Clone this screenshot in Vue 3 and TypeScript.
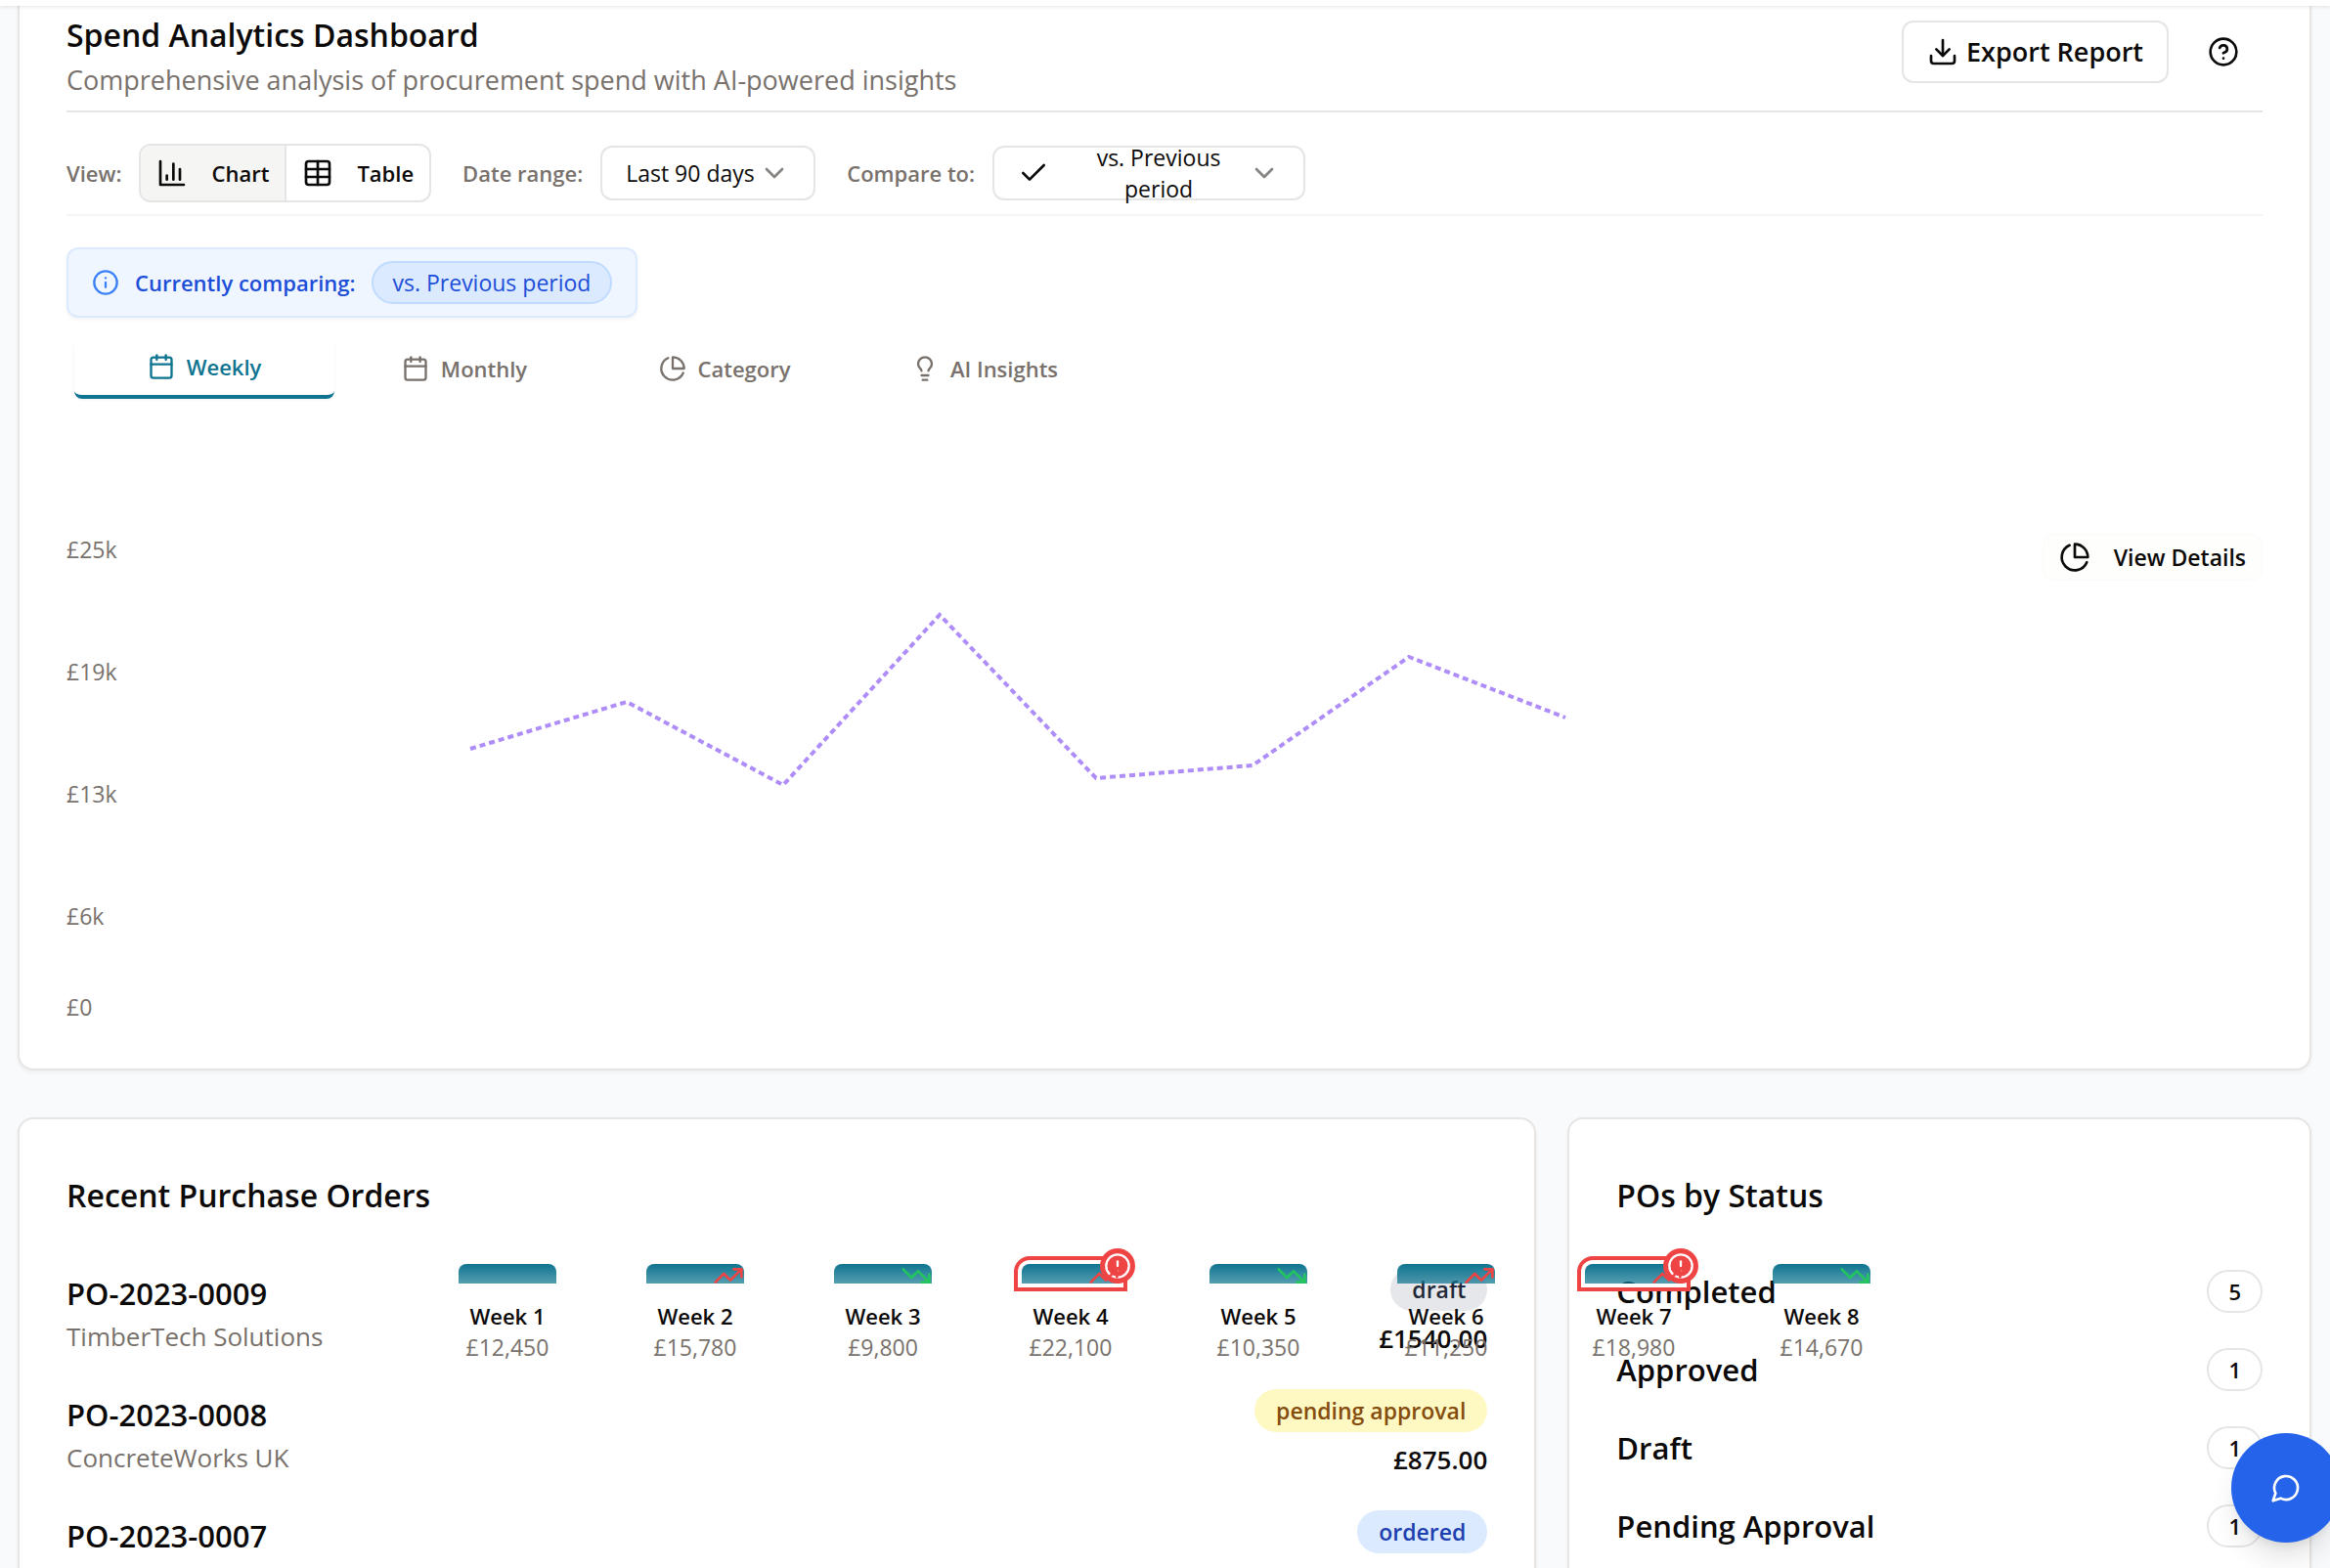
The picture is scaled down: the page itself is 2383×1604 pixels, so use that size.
<script setup lang="ts">
import { ref } from 'vue'

interface Week {
  name: string
  amount: string
  trend?: 'up' | 'down'
  alert?: boolean
}

interface Order {
  id: string
  supplier?: string
  status: string
  tone: string
  total?: string
}

const view = ref<'chart' | 'table'>('chart')
const range = ref('90')
const compare = ref('previous')
const activeTab = ref('Weekly')

const tabs = [
  { name: 'Weekly', icon: 'calendar' },
  { name: 'Monthly', icon: 'calendar' },
  { name: 'Category', icon: 'pie' },
  { name: 'AI Insights', icon: 'bulb' },
]

const axis = ['£25k', '£19k', '£13k', '£6k', '£0']

const weeks: Week[] = [
  { name: 'Week 1', amount: '£12,450' },
  { name: 'Week 2', amount: '£15,780', trend: 'up' },
  { name: 'Week 3', amount: '£9,800', trend: 'down' },
  { name: 'Week 4', amount: '£22,100', trend: 'up', alert: true },
  { name: 'Week 5', amount: '£10,350', trend: 'down' },
  { name: 'Week 6', amount: '£11,250', trend: 'up' },
  { name: 'Week 7', amount: '£18,980', trend: 'up', alert: true },
  { name: 'Week 8', amount: '£14,670', trend: 'down' },
]

const orders: Order[] = [
  { id: 'PO-2023-0009', supplier: 'TimberTech Solutions', status: 'draft', tone: 'gray', total: '£1540.00' },
  { id: 'PO-2023-0008', supplier: 'ConcreteWorks UK', status: 'pending approval', tone: 'yellow', total: '£875.00' },
  { id: 'PO-2023-0007', status: 'ordered', tone: 'blue' },
]

const statuses = [
  { name: 'Completed', count: 5 },
  { name: 'Approved', count: 1 },
  { name: 'Draft', count: 1 },
  { name: 'Pending Approval', count: 1 },
]
</script>

<template>
  <div class="page">
    <div class="topbar"></div>

    <main class="content">
      <section class="card analytics">
        <header class="head">
          <div>
            <h1 class="title">Spend Analytics Dashboard</h1>
            <p class="subtitle">Comprehensive analysis of procurement spend with AI-powered insights</p>
          </div>
          <div class="actions">
            <button type="button" class="export">
              <svg class="icon lg" viewBox="0 0 24 24"><path d="M21 15v4a2 2 0 0 1-2 2H5a2 2 0 0 1-2-2v-4" /><path d="m7 10 5 5 5-5" /><path d="M12 15V3" /></svg>
              Export Report
            </button>
            <button type="button" class="help" aria-label="Help">
              <svg class="icon lg" viewBox="0 0 24 24"><circle cx="12" cy="12" r="10" /><path d="M9.09 9a3 3 0 0 1 5.83 1c0 2-3 3-3 3" /><path d="M12 17h.01" /></svg>
            </button>
          </div>
        </header>

        <div class="toolbar">
          <div class="field">
            <span class="label">View:</span>
            <div class="toggle">
              <button type="button" :class="{ on: view === 'chart' }" @click="view = 'chart'">
                <svg class="icon lg" viewBox="0 0 24 24"><path d="M3 3v18h18" /><path d="M13 17V5" /><path d="M18 17V9" /><path d="M8 17v-3" /></svg>
                Chart
              </button>
              <button type="button" :class="{ on: view === 'table' }" @click="view = 'table'">
                <svg class="icon lg" viewBox="0 0 24 24"><path d="M12 3v18" /><rect x="3" y="3" width="18" height="18" rx="2" /><path d="M3 9h18" /><path d="M3 15h18" /></svg>
                Table
              </button>
            </div>
          </div>
          <div class="field">
            <label class="label" for="range">Date range:</label>
            <div class="select">
              <select id="range" v-model="range">
                <option value="90">Last 90 days</option>
                <option value="30">Last 30 days</option>
              </select>
              <svg class="icon lg chevron" viewBox="0 0 24 24"><path d="m6 9 6 6 6-6" /></svg>
            </div>
          </div>
          <div class="field">
            <label class="label" for="compare">Compare to:</label>
            <div class="select wide">
              <svg class="icon lg" viewBox="0 0 24 24"><path d="M20 6 9 17l-5-5" /></svg>
              <span class="chosen" aria-hidden="true">vs. Previous period</span>
              <svg class="icon lg chevron" viewBox="0 0 24 24"><path d="m6 9 6 6 6-6" /></svg>
              <select id="compare" v-model="compare" class="cover">
                <option value="previous">vs. Previous period</option>
                <option value="year">vs. Last year</option>
              </select>
            </div>
          </div>
        </div>

        <div class="comparing">
          <svg class="icon info" viewBox="0 0 24 24"><circle cx="12" cy="12" r="10" /><path d="M12 16v-4" /><path d="M12 8h.01" /></svg>
          <strong>Currently comparing:</strong>
          <span class="chip">vs. Previous period</span>
        </div>

        <div class="tabs" role="tablist">
          <button
            v-for="tab in tabs"
            :key="tab.name"
            type="button"
            role="tab"
            class="tab"
            :class="{ active: activeTab === tab.name }"
            :aria-selected="activeTab === tab.name"
            @click="activeTab = tab.name"
          >
            <svg class="icon" viewBox="0 0 24 24">
              <template v-if="tab.icon === 'calendar'"><path d="M8 2v4" /><path d="M16 2v4" /><rect x="3" y="4" width="18" height="18" rx="2" /><path d="M3 10h18" /></template>
              <template v-else-if="tab.icon === 'pie'"><path d="M21.21 15.89A10 10 0 1 1 8 2.83" /><path d="M22 12A10 10 0 0 0 12 2v10z" /></template>
              <template v-else><path d="M15 14c.2-1 .7-1.7 1.5-2.5 1-.9 1.5-2.2 1.5-3.5A6 6 0 0 0 6 8c0 1 .2 2.2 1.5 3.5.7.7 1.3 1.5 1.5 2.5" /><path d="M9 18h6" /><path d="M10 22h4" /></template>
            </svg>
            {{ tab.name }}
          </button>
        </div>

        <div class="plot">
          <div class="axis">
            <span v-for="tick in axis" :key="tick">{{ tick }}</span>
          </div>
          <svg class="trendline" viewBox="0 0 1136 200">
            <polyline points="8,149 168,101 328,186 488,12 648,179 808,166 968,55 1128,117" />
          </svg>
          <button type="button" class="details">
            <svg class="icon lg" viewBox="0 0 24 24"><path d="M21.21 15.89A10 10 0 1 1 8 2.83" /><path d="M22 12A10 10 0 0 0 12 2v10z" /></svg>
            View Details
          </button>

          <div class="weeks">
            <div v-for="week in weeks" :key="week.name" class="week">
              <div class="bar" :class="{ flagged: week.alert }">
                <span v-if="week.alert" class="alert">
                  <svg class="icon" viewBox="0 0 24 24"><circle cx="12" cy="12" r="10" /><path d="M12 8v4" /><path d="M12 16h.01" /></svg>
                </span>
                <svg v-if="week.trend === 'up'" class="icon trend up" viewBox="0 0 24 24"><path d="m22 7-8.5 8.5-5-5L2 17" /><path d="M16 7h6v6" /></svg>
                <svg v-if="week.trend === 'down'" class="icon trend down" viewBox="0 0 24 24"><path d="m22 17-8.5-8.5-5 5L2 7" /><path d="M16 17h6v-6" /></svg>
              </div>
              <span class="week-name">{{ week.name }}</span>
              <span class="week-amount">{{ week.amount }}</span>
            </div>
          </div>
        </div>
      </section>

      <div class="columns">
        <section class="card panel">
          <h2 class="title">Recent Purchase Orders</h2>
          <ul class="rows">
            <li v-for="order in orders" :key="order.id" class="order">
              <div class="who">
                <span class="po">{{ order.id }}</span>
                <span v-if="order.supplier" class="supplier">{{ order.supplier }}</span>
              </div>
              <div class="state">
                <span class="pill" :class="order.tone">{{ order.status }}</span>
                <span v-if="order.total" class="total">{{ order.total }}</span>
              </div>
            </li>
          </ul>
        </section>

        <section class="card panel">
          <h2 class="title">POs by Status</h2>
          <ul class="rows">
            <li v-for="status in statuses" :key="status.name" class="status">
              <span class="po">{{ status.name }}</span>
              <span class="count">{{ status.count }}</span>
            </li>
          </ul>
        </section>
      </div>
    </main>

    <button type="button" class="chat" aria-label="Open chat">
      <svg class="icon lg" viewBox="0 0 24 24"><path d="M7.9 20A9 9 0 1 0 4 16.1L2 22Z" /></svg>
    </button>
  </div>
</template>

<style>
body {
  margin: 0;
  background: #f8fafc;
}
</style>

<style scoped>
.page {
  height: 100vh;
  overflow: hidden;
  background: #f8fafc;
  color: #0c0a09;
  font: 400 23px/32px "Open Sans", "Noto Sans", sans-serif;
}
.page * {
  box-sizing: border-box;
}
button,
select {
  margin: 0;
  border: 0;
  background: none;
  color: inherit;
  font: inherit;
  cursor: pointer;
}
h1,
h2,
p,
ul {
  margin: 0;
  padding: 0;
  list-style: none;
}
.icon {
  width: 28px;
  height: 28px;
  flex: none;
  fill: none;
  stroke: currentColor;
  stroke-width: 2;
  stroke-linecap: round;
  stroke-linejoin: round;
}
.icon.lg {
  width: 32px;
  height: 32px;
}
.topbar {
  position: relative;
  z-index: 2;
  height: 6px;
  background: #fff;
  box-shadow: 0 1px 4px rgba(0, 0, 0, 0.1);
}
.content {
  padding: 0 19px 0 18px;
}
.card {
  border: 2px solid #e7e5e4;
  border-radius: 16px;
  background: #fff;
  box-shadow: 0 2px 4px rgba(0, 0, 0, 0.05);
}
.title {
  font-size: 32px;
  font-weight: 600;
  line-height: 40px;
}

/* analytics card */
.analytics {
  padding: 10px 48px 48px;
  border-top: 0;
  border-radius: 0 0 16px 16px;
}
.head {
  display: flex;
  justify-content: space-between;
  align-items: flex-start;
  padding-bottom: 9px;
  border-bottom: 2px solid #e5e5e5;
}
.subtitle {
  margin-top: 4px;
  color: #78716c;
  font-size: 27px;
  line-height: 44px;
}
.actions {
  display: flex;
  gap: 16px;
  padding-top: 5px;
}
.export {
  display: flex;
  align-items: center;
  gap: 8px;
  height: 64px;
  padding: 0 24px;
  border: 2px solid #e5e5e5;
  border-radius: 12px;
  font-size: 27px;
  font-weight: 600;
}
.help {
  display: grid;
  place-items: center;
  width: 80px;
  height: 64px;
  padding: 0;
}
.toolbar {
  display: flex;
  align-items: center;
  gap: 32px;
  padding: 32px 0 12px;
  border-bottom: 2px solid #f5f5f4;
}
.field {
  display: flex;
  align-items: center;
  gap: 18px;
}
.label {
  color: #78716c;
  font-size: 22px;
  font-weight: 600;
}
.toggle {
  display: flex;
  height: 60px;
  overflow: hidden;
  border: 2px solid #e5e5e5;
  border-radius: 12px;
}
.toggle button {
  display: flex;
  align-items: center;
  gap: 24px;
  padding: 0 16px;
  font-size: 22px;
  font-weight: 600;
}
.toggle button + button {
  border-left: 2px solid #e5e5e5;
}
.toggle .on {
  background: #f5f5f4;
}
.select {
  position: relative;
  display: flex;
  align-items: center;
  width: 220px;
  height: 56px;
  border: 2px solid #e5e5e5;
  border-radius: 12px;
}
.select select {
  width: 100%;
  height: 100%;
  padding: 0 24px;
  appearance: none;
  outline: none;
}
.select > .chevron {
  position: absolute;
  right: 24px;
  color: #868381;
  pointer-events: none;
}
.select.wide {
  width: 320px;
  padding: 0 24px;
}
.chosen {
  flex: 1;
  padding: 0 48px 0 36px;
  text-align: center;
}
.select .cover {
  position: absolute;
  inset: 0;
  opacity: 0;
}
.comparing {
  display: flex;
  align-items: center;
  gap: 16px;
  width: fit-content;
  height: 72px;
  margin-top: 32px;
  padding: 0 24px;
  border: 2px solid #dbeafe;
  border-radius: 12px;
  background: #eff6ff;
  box-shadow: 0 2px 4px rgba(0, 0, 0, 0.05);
  color: #1d4ed8;
}
.comparing strong {
  font-size: 22px;
  font-weight: 600;
}
.info {
  color: #3b82f6;
}
.chip {
  height: 44px;
  padding: 0 20px;
  border: 2px solid #bfdbfe;
  border-radius: 22px;
  background: #dbeafe;
  line-height: 40px;
}
.tabs {
  display: grid;
  grid-template-columns: repeat(4, 266px);
  margin-top: 21px;
  padding-left: 8px;
}
.tab {
  display: flex;
  justify-content: center;
  align-items: center;
  gap: 12px;
  height: 62px;
  padding: 0;
  border-radius: 8px;
  color: #78716c;
  font-size: 22px;
  font-weight: 600;
}
.tab.active {
  border-bottom: 4px solid #0e7490;
  box-shadow: 0 1px 3px rgba(0, 0, 0, 0.06);
  color: #0e7490;
}

/* weekly plot */
.plot {
  position: relative;
  display: flex;
  justify-content: space-between;
  align-items: flex-start;
  height: 499px;
  margin-top: 138px;
}
.axis {
  display: grid;
  grid-template-rows: 125px 125px 125px 93px 32px;
  color: #78716c;
}
.trendline {
  position: absolute;
  top: 71px;
  left: 405px;
  width: 1136px;
  height: 200px;
}
.trendline polyline {
  fill: none;
  stroke: #8b5cf6;
  stroke-width: 4;
  stroke-dasharray: 6 4;
  opacity: 0.7;
}
.details {
  display: flex;
  align-items: center;
  gap: 24px;
  height: 48px;
  padding: 0 16px;
  border: 1px solid #fafaf9;
  border-radius: 12px;
  background: #fefefd;
  font-weight: 600;
}
.weeks {
  position: absolute;
  z-index: 1;
  top: 747px;
  right: 0;
  left: 0;
  display: flex;
  justify-content: center;
  gap: 92px;
}
.week {
  display: flex;
  flex-direction: column;
  align-items: center;
  width: 100px;
}
.bar {
  position: relative;
  width: 100px;
  height: 20px;
  margin-bottom: 17px;
  border-radius: 8px 8px 0 0;
  background: linear-gradient(#0e7490, rgba(14, 116, 144, 0.7));
}
.bar.flagged {
  box-shadow: 0 0 0 4px #fff, 0 0 0 8px #ef4444;
}
.alert {
  position: absolute;
  top: -16px;
  right: -16px;
  display: grid;
  place-items: center;
  width: 36px;
  height: 36px;
  border-radius: 50%;
  background: #ef4444;
  color: #fff;
}
.trend {
  position: absolute;
  top: -4px;
  right: 0;
  width: 32px;
  height: 32px;
}
.up {
  color: #ef4444;
}
.down {
  color: #22c55e;
}
.week-name {
  font-size: 22px;
  font-weight: 600;
}
.week-amount {
  color: #78716c;
}

/* lower panels */
.columns {
  display: grid;
  grid-template-columns: repeat(3, 1fr);
  gap: 32px;
  margin-top: 48px;
}
.panel {
  padding: 48px;
}
.panel:first-child {
  grid-column: span 2;
}
.panel .title {
  line-height: 60px;
}
.rows {
  display: flex;
  flex-direction: column;
  gap: 32px;
  margin-top: 44px;
}
.order,
.status {
  display: flex;
  justify-content: space-between;
}
.who {
  display: flex;
  flex-direction: column;
  padding-top: 4px;
}
.po {
  font-size: 31px;
  font-weight: 600;
  line-height: 44px;
}
.supplier {
  color: #78716c;
  font-size: 26px;
  line-height: 44px;
}
.state {
  display: flex;
  flex-direction: column;
  align-items: flex-end;
  gap: 8px;
}
.pill {
  height: 44px;
  padding: 0 22px;
  border-radius: 22px;
  font-weight: 600;
  line-height: 44px;
}
.gray {
  background: #e5e7eb;
  color: #1f2937;
}
.yellow {
  background: #fef9c3;
  color: #854d0e;
}
.blue {
  background: #dbeafe;
  color: #1e40af;
}
.total {
  font-size: 26px;
  font-weight: 600;
  line-height: 40px;
}
.status {
  align-items: center;
  height: 48px;
}
.count {
  height: 44px;
  padding: 0 20px;
  border: 2px solid #e5e5e5;
  border-radius: 22px;
  font-size: 22px;
  font-weight: 600;
  line-height: 40px;
}
.chat {
  position: fixed;
  z-index: 3;
  right: -11px;
  bottom: 26px;
  display: grid;
  place-items: center;
  width: 112px;
  height: 112px;
  padding: 0;
  border-radius: 50%;
  background: #2563eb;
  box-shadow: 0 20px 30px -6px rgba(0, 0, 0, 0.12), 0 8px 12px -6px rgba(0, 0, 0, 0.1);
  color: #fff;
}
</style>
